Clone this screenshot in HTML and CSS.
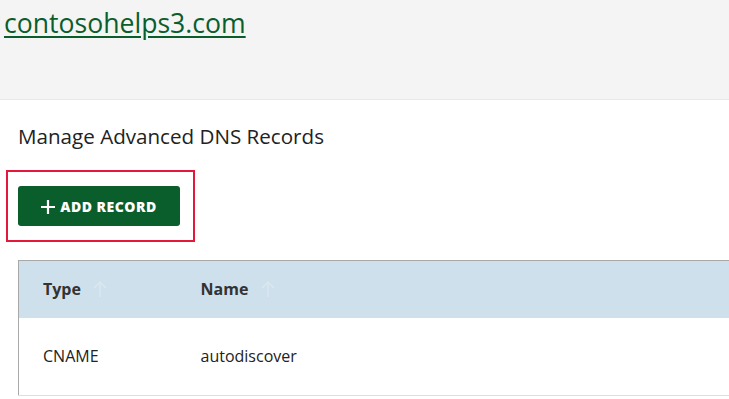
FILE: index.html
```
<!DOCTYPE html>
<html lang="en">

<head>
    <meta charset="UTF-8">
    <meta name="viewport" content="width=device-width, initial-scale=1.0">
    <title>Manage Advanced DNS Records</title>
    <link rel="stylesheet" href="styles.css">
</head>

<body>
    <header class="site-header">
        <a class="domain-link" href="#">contosohelps3.com</a>
    </header>
    <main class="content">
        <h1 class="page-title">Manage Advanced DNS Records</h1>
        <div class="callout">
            <button class="add-button" type="button">
                <svg class="plus" width="14" height="14" viewBox="0 0 14 14">
                    <path d="M7 0v14M0 7h14" stroke="currentColor" stroke-width="2.2" fill="none" />
                </svg>
                <span>ADD RECORD</span>
            </button>
        </div>
        <table class="records">
            <thead>
                <tr>
                    <th class="col-type">Type <svg class="sort" width="14" height="16" viewBox="0 0 14 16"><path d="M7 16V1M1 7l6-6 6 6" stroke="currentColor" stroke-width="1.4" fill="none" /></svg></th>
                    <th class="col-name">Name <svg class="sort" width="14" height="16" viewBox="0 0 14 16"><path d="M7 16V1M1 7l6-6 6 6" stroke="currentColor" stroke-width="1.4" fill="none" /></svg></th>
                    <th></th>
                </tr>
            </thead>
            <tbody>
                <tr>
                    <td>CNAME</td>
                    <td>autodiscover</td>
                    <td></td>
                </tr>
            </tbody>
        </table>
    </main>
</body>

</html>
```

FILE: styles.css
```
* {
    box-sizing: border-box;
    margin: 0;
    padding: 0;
}

body {
    font-family: 'Open Sans', sans-serif;
    color: #222;
    background: #fff;
    overflow: hidden;
    --green: #0a5e2c;
    --red: #e4183a;
}

.site-header {
    height: 100px;
    background-color: #f4f4f4;
    border-bottom: 1px solid #e8e8e8;
    padding: 5px 4px 0;
}

.domain-link {
    font-size: 26.6px;
    color: var(--green);
    text-decoration: underline;
    text-decoration-thickness: 2px;
    text-underline-offset: 3px;
}

.content {
    padding: 0 0 0 18px;
}

.page-title {
    font-size: 20.6px;
    font-weight: 400;
    margin-top: 22px;
    line-height: 28px;
}

.callout {
    display: inline-block;
    margin: 20px 0 0 -12px;
    border: 2px solid var(--red);
    padding: 14px 13px 14px 10px;
}

.add-button {
    display: flex;
    align-items: center;
    justify-content: center;
    gap: 5px;
    width: 162px;
    height: 40px;
    border: none;
    border-radius: 3px;
    background-color: var(--green);
    color: #fff;
    font-family: inherit;
    font-size: 14px;
    font-weight: 800;
    letter-spacing: 0.5px;
}

.add-button .plus {
    margin-top: 1px;
}

.records {
    margin-top: 18px;
    width: 800px;
    border-collapse: collapse;
    border-top: 1px solid #a8a8a8;
    border-left: 1px solid #a8a8a8;
    font-size: 16px;
}

.records th {
    height: 57px;
    background-color: #cfe0ed;
    text-align: left;
    font-weight: 700;
    color: #333;
    padding-left: 24px;
}

.records td {
    height: 78px;
    padding-left: 24px;
    color: #222;
    border-bottom: 1px solid #dedede;
}

.records .col-type {
    width: 158px;
}

.records .col-name {
    width: 200px;
}

.sort {
    color: #dce7f0;
    margin-left: 8px;
    vertical-align: -2px;
}
```
